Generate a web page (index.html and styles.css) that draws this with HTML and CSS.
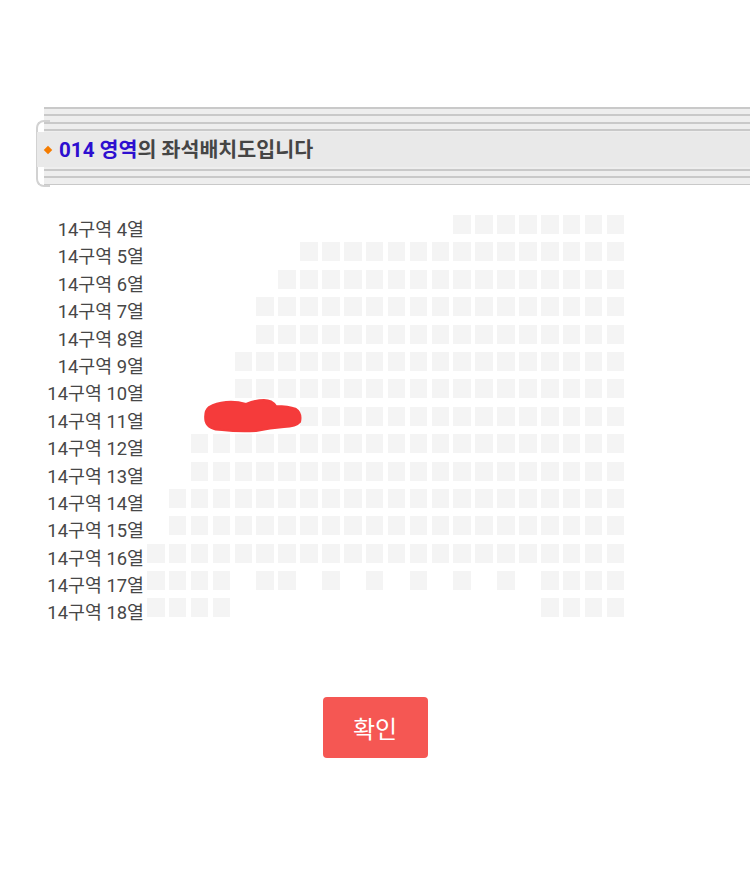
FILE: index.html
```html
<!DOCTYPE html>
<html lang="ko">
<head>
  <meta charset="UTF-8" />
  <meta name="viewport" content="width=device-width, initial-scale=1.0"/>
  <title>좌석배치도</title>
  <link rel="stylesheet" href="styles.css">
</head>
<body>

  <div class="area-title">
    <div class="stripes stripes-top"></div>
    <div class="title-band">
      <span class="bullet"></span>
      <span class="title-text"><span class="area-name">014 영역</span>의 좌석배치도입니다</span>
    </div>
    <div class="stripes stripes-bottom"></div>
  </div>

  <div class="seat-map">
    <div class="row-labels" id="rowLabels"></div>
    <div class="seat-area">
      <div class="seat-grid" id="seatGrid"></div>
      <svg class="scribble" width="100" height="36" viewBox="0 0 100 36">
        <path d="M5 8 Q12 4 22 3 Q32 2 42 5 Q52 1 60 1 Q68 1 72 7 Q84 7 92 10 Q98 14 96 23 Q92 28 80 28 Q66 29 52 32 Q34 33 18 31 Q4 31 1.5 22 Q0 12 5 8 Z"
              fill="#f53b3b" stroke="#f53b3b" stroke-width="2" stroke-linejoin="round"/>
      </svg>
    </div>
  </div>

  <div class="actions">
    <button type="button" class="confirm-btn">확인</button>
  </div>

  <script>
    // seats per row (columns 1..22)
    const COLS = 22;
    const range = (a, b) => Array.from({ length: b - a + 1 }, (_, i) => a + i);
    const rows = [
      { no: 4, seats: range(15, 22) },
      { no: 5, seats: range(8, 22) },
      { no: 6, seats: range(7, 22) },
      { no: 7, seats: range(6, 22) },
      { no: 8, seats: range(6, 22) },
      { no: 9, seats: range(5, 22) },
      { no: 10, seats: range(5, 22) },
      { no: 11, seats: range(4, 22) },
      { no: 12, seats: range(3, 22) },
      { no: 13, seats: range(3, 22) },
      { no: 14, seats: range(2, 22) },
      { no: 15, seats: range(2, 22) },
      { no: 16, seats: range(1, 22) },
      { no: 17, seats: [1, 2, 3, 4, 6, 7, 9, 11, 13, 15, 17, 19, 20, 21, 22] },
      { no: 18, seats: [1, 2, 3, 4, 19, 20, 21, 22] }
    ];

    const labels = document.getElementById("rowLabels");
    const grid = document.getElementById("seatGrid");

    rows.forEach(row => {
      const label = document.createElement("div");
      label.className = "row-label";
      label.textContent = "14구역 " + row.no + "열";
      labels.appendChild(label);

      for (let c = 1; c <= COLS; c++) {
        const seat = document.createElement("div");
        seat.className = row.seats.includes(c) ? "seat" : "seat empty";
        grid.appendChild(seat);
      }
    });
  </script>

</body>
</html>
```

FILE: styles.css
```css
:root {
  --line: #c9c9c9;
  --stripe-bg: #eeeeee;
  --band: #e9e9e9;
  --seat: #f4f4f4;
  --red: #f55753;
}

* {
  box-sizing: border-box;
}

body {
  margin: 0;
  padding: 0;
  font-family: Roboto, "Noto Sans CJK KR", sans-serif;
  background: #fff;
  color: #444;
}

/* title bar */
.area-title {
  position: relative;
  margin: 107px 0 0 44px;
}

.area-title::before {
  content: "";
  position: absolute;
  left: -8px;
  top: 13px;
  width: 12px;
  height: 63px;
  border: 2px solid #d2d2d2;
  border-right: none;
  border-radius: 8px 0 0 8px;
}

.stripes-top {
  height: 25px;
  background: repeating-linear-gradient(to bottom, var(--line) 0 2px, var(--stripe-bg) 2px 7.5px);
}

.stripes-bottom {
  height: 18px;
  background: repeating-linear-gradient(to bottom, var(--stripe-bg) 0 1.5px, var(--line) 1.5px 3.5px, var(--stripe-bg) 3.5px 7.5px);
}

.title-band {
  position: relative;
  height: 35px;
  margin-left: -7px;
  padding-left: 7px;
  background: var(--band);
  display: flex;
  align-items: center;
}

.bullet {
  flex: none;
  width: 6px;
  height: 6px;
  margin: 0 8px 0 1px;
  background: #f57c00;
  transform: rotate(45deg);
}

.title-text {
  font-size: 20.6px;
  font-weight: bold;
  line-height: 24px;
  color: #454545;
}

.area-name {
  color: #2d0fd0;
}

/* seat map */
.seat-map {
  display: flex;
  align-items: flex-start;
  margin-top: 30px;
}

.row-labels {
  width: 144px;
  text-align: right;
  font-size: 18.4px;
  color: #474747;
}

.row-label {
  height: 27.4px;
  line-height: 27.4px;
  padding-top: 1px;
}

.seat-area {
  position: relative;
  margin-left: 3px;
}

.seat-grid {
  display: grid;
  grid-template-columns: repeat(22, 17.5px);
  grid-auto-rows: 19px;
  column-gap: 4.4px;
  row-gap: 8.4px;
}

.seat {
  background: var(--seat);
}

.seat.empty {
  visibility: hidden;
}

.scribble {
  position: absolute;
  left: 57px;
  top: 184px;
}

/* button */
.actions {
  display: flex;
  justify-content: center;
  margin-top: 71px;
}

.confirm-btn {
  width: 105px;
  height: 61px;
  border: none;
  border-radius: 4px;
  background: var(--red);
  color: #fff;
  font-family: Roboto, "Noto Sans CJK KR", sans-serif;
  font-size: 24px;
  cursor: pointer;
}
```
